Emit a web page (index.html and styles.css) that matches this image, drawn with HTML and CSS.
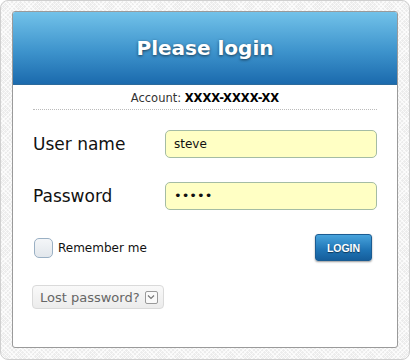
FILE: index.html
```html
<!DOCTYPE html>
<html lang="en">

<head>
    <meta charset="UTF-8">
    <title>Please login</title>
    <link rel="stylesheet" href="styles.css">
</head>

<body>
    <div class="frame">
        <div class="panel">
            <div class="header">Please login</div>
            <div class="account">Account: <b>XXXX-XXXX-XX</b></div>
            <div class="form">
                <div class="row">
                    <label class="label">User name</label>
                    <div class="input">steve</div>
                </div>
                <div class="row">
                    <label class="label">Password</label>
                    <div class="input dots">&bull;&bull;&bull;&bull;&bull;</div>
                </div>
                <div class="actions">
                    <div class="remember">
                        <span class="check"></span>
                        <span>Remember me</span>
                    </div>
                    <div class="login-btn">LOGIN</div>
                </div>
                <div class="lost">
                    <span>Lost password?</span>
                    <span class="arrow">
                        <svg width="8" height="6" viewBox="0 0 8 6">
                            <path d="M1 1.5 L4 4.5 L7 1.5" fill="none" stroke="#777" stroke-width="1.2" />
                        </svg>
                    </span>
                </div>
            </div>
        </div>
    </div>
</body>

</html>
```

FILE: styles.css
```css
* {
    margin: 0;
    padding: 0;
    box-sizing: border-box;
}

body {
    font-family: "DejaVu Sans", Verdana, sans-serif;
    background: #fff;
}

.frame {
    width: 410px;
    height: 360px;
    padding: 10px 11px 11px 11px;
    border: 1px solid #cfcfcf;
    border-radius: 8px;
    background-color: #ececec;
    background-image: repeating-linear-gradient(45deg, rgba(255, 255, 255, 0.7) 0 1px, transparent 1px 3px),
        repeating-linear-gradient(-45deg, rgba(255, 255, 255, 0.7) 0 1px, transparent 1px 3px);
}

.panel {
    height: 100%;
    background: #fff;
    border: 1px solid #9a9a9a;
    border-radius: 3px;
    overflow: hidden;
}

.header {
    height: 73px;
    line-height: 72px;
    text-align: center;
    color: #fff;
    font-size: 20px;
    font-weight: bold;
    text-shadow: 0 1px 3px rgba(0, 0, 0, 0.6);
    background: linear-gradient(#72c2e9, #3d93cc 55%, #1b6aad);
    border-bottom: 1px solid #2b6a9c;
}

.account {
    margin: 0 20px;
    padding: 6px 0 4px;
    text-align: center;
    font-size: 11.5px;
    color: #333;
    border-bottom: 1px dotted #bbb;
}

.account b {
    color: #000;
}

.form {
    padding: 20px 20px 0 20px;
}

.row {
    display: flex;
    align-items: center;
    margin-bottom: 24px;
}

.label {
    width: 132px;
    font-size: 17px;
    color: #111;
}

.input {
    flex: 1;
    height: 28px;
    line-height: 26px;
    padding-left: 8px;
    font-size: 12px;
    color: #111;
    background: #ffffc4;
    border: 1px solid #a4bca4;
    border-radius: 5px;
}

.dots {
    font-size: 13px;
}

.actions {
    display: flex;
    align-items: center;
    justify-content: space-between;
    padding: 0 5px 0 1px;
}

.remember {
    display: flex;
    align-items: center;
    font-size: 12px;
    color: #111;
}

.check {
    width: 19px;
    height: 20px;
    margin-right: 5px;
    border: 1px solid #9ab0c4;
    border-radius: 5px;
    background: linear-gradient(#f4f6f8, #e2e7ec);
}

.login-btn {
    width: 57px;
    height: 27px;
    line-height: 26px;
    text-align: center;
    font-family: "Liberation Sans", Arial, sans-serif;
    font-size: 10.5px;
    font-weight: bold;
    color: #fff;
    text-shadow: 0 1px 1px rgba(0, 0, 0, 0.5);
    background: linear-gradient(#47a3dc, #1f74b5 60%, #155e9c);
    border: 1px solid #1b5c92;
    border-radius: 3px;
    box-shadow: 0 1px 2px rgba(0, 0, 0, 0.4);
}

.lost {
    display: inline-flex;
    align-items: center;
    margin-top: 24px;
    margin-left: -1px;
    height: 24px;
    padding: 0 5px 0 7px;
    font-size: 13px;
    color: #666;
    background: linear-gradient(#f9f9f9, #ececec);
    border: 1px solid #dadada;
    border-radius: 4px;
}

.arrow {
    display: flex;
    align-items: center;
    justify-content: center;
    width: 13px;
    height: 13px;
    margin-left: 5px;
    border: 1px solid #9a9a9a;
    border-radius: 2px;
    background: #fafafa;
}
```
